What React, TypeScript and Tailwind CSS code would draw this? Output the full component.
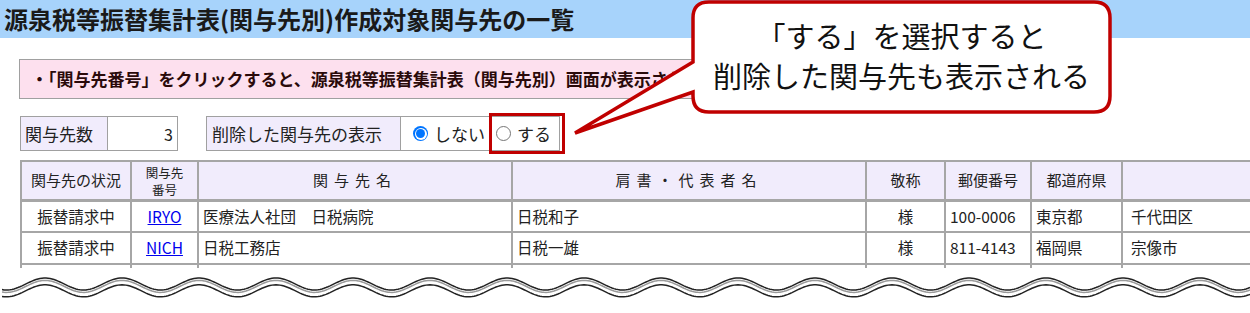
import React from "react";

const FONT = { fontFamily: '"Noto Sans CJK JP", "Noto Sans", sans-serif' };

function wavePath(offset: number) {
  const pts: string[] = [];
  for (let x = 2; x <= 1250; x += 2) {
    const y = 284 + offset - 6 * Math.sin((2 * Math.PI * (x - 25.75)) / 77);
    pts.push(`${x === 2 ? "M" : "L"}${x},${y.toFixed(2)}`);
  }
  return pts.join(" ");
}

function Radio({ checked }: { checked: boolean }) {
  return checked ? (
    <span className="w-[15px] h-[15px] rounded-full bg-[#0075ff] flex items-center justify-center shrink-0">
      <span className="w-[12px] h-[12px] rounded-full bg-white flex items-center justify-center">
        <span className="w-[9px] h-[9px] rounded-full bg-[#0075ff]" />
      </span>
    </span>
  ) : (
    <span className="w-[15px] h-[15px] rounded-full border border-[#767676] bg-white shrink-0" />
  );
}

const widths = ["w-[110px]", "w-[67px]", "w-[314px]", "w-[354px]", "w-[79px]", "w-[86px]", "w-[91px]", "w-[200px]"];

function Cell({ i, children, align = "left", cls = "" }: { i: number; children?: React.ReactNode; align?: string; cls?: string }) {
  return (
    <div
      className={`${widths[i]} shrink-0 border-r-2 border-[#a6a6a6] flex items-center ${
        align === "center" ? "justify-center" : "justify-start pl-[4px]"
      } ${cls}`}
    >
      {children}
    </div>
  );
}

export default function App() {
  const rows = [
    ["振替請求中", "IRYO", "医療法人社団　日税病院", "日税和子", "様", "100-0006", "東京都", "千代田区"],
    ["振替請求中", "NICH", "日税工務店", "日税一雄", "様", "811-4143", "福岡県", "宗像市"],
  ];
  return (
    <div className="relative w-[1250px] h-[313px] overflow-hidden bg-white text-[#222]" style={FONT}>
      {/* Title bar */}
      <div className="h-[38px] bg-[#a7d3fb] flex items-center pl-[4px]">
        <span className="text-[24px] font-bold leading-none text-[#1a1a1a]">
          源泉税等振替集計表(関与先別)作成対象関与先の一覧
        </span>
      </div>

      {/* Notice */}
      <div className="mt-[21px] ml-[19px] w-[1000px] h-[40px] border border-[#a0a0a0] bg-[#fde0ee] flex items-center pl-[11px]">
        <span className="text-[17px] font-bold text-[#2a0a0a] whitespace-nowrap">
          ・「関与先番号」をクリックすると、源泉税等振替集計表（関与先別）画面が表示されます。
        </span>
      </div>

      {/* Controls */}
      <div className="mt-[17px] ml-[20px] h-[35px] flex gap-[28px]">
        <div className="flex border border-[#a0a0a0] h-full">
          <div className="w-[87px] bg-[#f1ecfc] border-r border-[#a0a0a0] flex items-center pl-[4px] text-[17px]">関与先数</div>
          <div className="w-[69px] flex items-center justify-end pr-[4px] text-[16px]">3</div>
        </div>
        <div className="flex border border-[#a0a0a0] h-full">
          <div className="w-[194px] bg-[#f1ecfc] border-r border-[#a0a0a0] flex items-center pl-[5px] text-[17px]">
            削除した関与先の表示
          </div>
          <div className="w-[158px] flex items-center pl-[12px] text-[17px]">
            <Radio checked />
            <span className="ml-[6px]">しない</span>
            <span className="ml-[11px] flex items-center">
              <Radio checked={false} />
            </span>
            <span className="ml-[6px]">する</span>
          </div>
        </div>
      </div>

      {/* Table */}
      <div className="mt-[9px] ml-[20px] h-[108px] overflow-hidden">
        <div className="border-t-2 border-l-2 border-[#a6a6a6] w-[1400px]">
          <div className="flex h-[40px] bg-[#f1ecfc] border-b-[3px] border-[#a6a6a6] text-[15px]">
            <Cell i={0} align="center">関与先の状況</Cell>
            <Cell i={1} align="center">
              <span className="flex flex-col items-center text-[12.5px] leading-[17px]">
                <span>関与先</span>
                <span>番号</span>
              </span>
            </Cell>
            <Cell i={2} align="center">
              <span className="tracking-[6px]">関与先名</span>
            </Cell>
            <Cell i={3} align="center">
              <span className="tracking-[6px]">肩書・代表者名</span>
            </Cell>
            <Cell i={4} align="center">敬称</Cell>
            <Cell i={5} align="center">郵便番号</Cell>
            <Cell i={6} align="center">都道府県</Cell>
            <Cell i={7} />
          </div>
          {rows.map((r, ri) => (
            <div
              key={ri}
              className={`flex ${ri === 0 ? "h-[31px]" : "h-[32px]"} border-b-2 border-[#a6a6a6] text-[15.5px]`}
            >
              <Cell i={0} align="center">{r[0]}</Cell>
              <Cell i={1} align="center">
                <span className="text-[#0000ee] underline">{r[1]}</span>
              </Cell>
              <Cell i={2}>{r[2]}</Cell>
              <Cell i={3}>{r[3]}</Cell>
              <Cell i={4} align="center">{r[4]}</Cell>
              <Cell i={5}>{r[5]}</Cell>
              <Cell i={6}>{r[6]}</Cell>
              <Cell i={7} cls="pl-[8px]">{r[7]}</Cell>
            </div>
          ))}
          <div className="flex h-[30px]">
            {widths.map((_, i) => (
              <Cell key={i} i={i} />
            ))}
          </div>
        </div>
      </div>

      {/* Wavy break */}
      <svg className="absolute left-0 top-0 pointer-events-none" width="1250" height="313">
        <path d={wavePath(0)} fill="none" stroke="#222" strokeWidth="1.5" />
        <path d={wavePath(2.4)} fill="none" stroke="#999" strokeWidth="1.5" />
        <path d={wavePath(6.8)} fill="none" stroke="#222" strokeWidth="1.5" />
      </svg>

      {/* Highlight box */}
      <div className="absolute left-[489px] top-[113px] w-[76px] h-[41px] border-[3px] border-[#c00000]" />

      {/* Callout */}
      <svg className="absolute left-0 top-0 pointer-events-none" width="1250" height="313">
        <path
          d="M709,2 H1094 Q1110,2 1110,18 V96 Q1110,112 1094,112 H709 Q693,112 693,96 V92 L575,133 L693,62 V18 Q693,2 709,2 Z"
          fill="#fff"
          stroke="#c00000"
          strokeWidth="3.5"
          strokeLinejoin="miter"
        />
      </svg>
      <div className="absolute left-[693px] top-[0px] w-[417px] h-[110px] flex flex-col items-center justify-center text-[29px] leading-[40px] text-[#111] pointer-events-none">
        <span>「する」を選択すると</span>
        <span>削除した関与先も表示される</span>
      </div>
    </div>
  );
}
